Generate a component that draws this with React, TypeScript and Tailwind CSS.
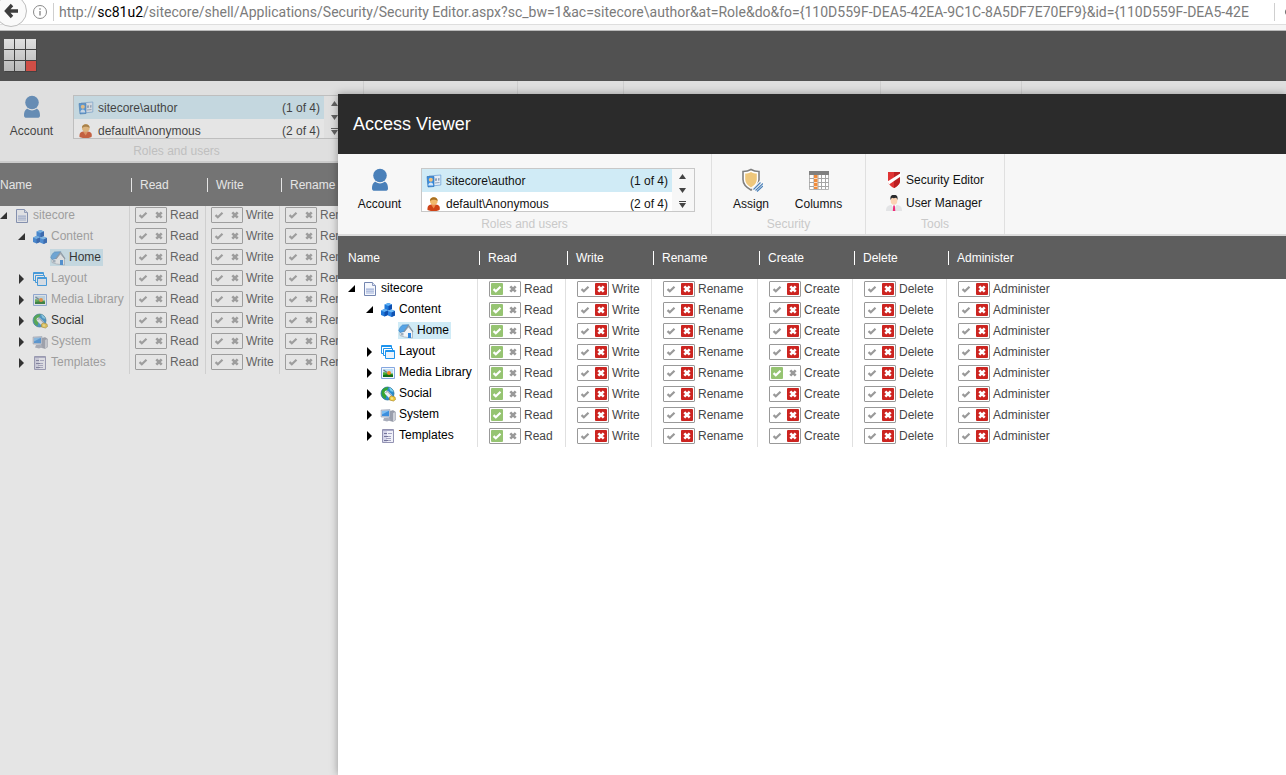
import React, { useState } from 'react';
import clsx from 'clsx';

type Access = 'allow' | 'deny' | null;

interface TreeItem {
  name: string;
  level: number;
  icon: React.ReactNode;
  open?: boolean;
  selected?: boolean;
  locked?: boolean;
}

/* ---------- Icons ---------- */

const DocIcon = () => (
  <svg width="16" height="16" viewBox="0 0 16 16">
    <path d="M2.500 1.500h8l3 3v10h-11z" fill="#f6f8fd" stroke="#7486b0" />
    <path d="M10.500 1.500v3h3" fill="#dfe5f4" stroke="#8a99be" />
    <path d="M4 7h8v6H4z" fill="#c9d3ea" />
    <path d="M4 8.500h8M4 10.500h8" stroke="#b3c0e0" />
  </svg>
);

const CubesIcon = () => (
  <svg width="16" height="16" viewBox="0 0 16 16">
    <path d="M4.500 2.500 8.500 1l3.500 1.500V7L8.500 8.500l-4-1.500z" fill="#1f78da" />
    <path d="M4.500 2.500 8.500 1 12 2.500 8.500 4z" fill="#5fb0f5" />
    <path d="M8.500 4 12 2.500V7L8.500 8.500z" fill="#0f4fae" />
    <path d="M1 8.500 4.500 7 8 8.500v4.500l-3.500 1.500L1 13z" fill="#1f78da" />
    <path d="M1 8.500 4.500 7 8 8.500 4.500 10z" fill="#5fb0f5" />
    <path d="M4.500 10 8 8.500V13l-3.500 1.500z" fill="#0f4fae" />
    <path d="M8 9l3.500-1.500L15 9v4.500L11.500 15 8 13.500z" fill="#2a82e2" />
    <path d="M8 9l3.500-1.500L15 9l-3.500 1.500z" fill="#6fbcf8" />
    <path d="M11.500 10.500 15 9v4.500L11.500 15z" fill="#1152b0" />
  </svg>
);

const HomeIcon = () => (
  <svg width="16" height="16" viewBox="0 0 16 16">
    <path d="M2 8v4.500L6.500 14 14.500 15V8.500L10.500 4 6 8.500z" fill="#f3f5f7" stroke="#a5b0ba" strokeWidth=".8" />
    <path d="M.800 7.500C1.500 5 3 3 4.500 2l6.200-.3L6 8.500 2.200 9.500z" fill="#55a4e6" stroke="#3c82c0" strokeWidth=".6" />
    <path d="M6 8.800 10.600 2.500 15 8.800" fill="none" stroke="#8796a5" strokeWidth="1.200" />
    <path d="M10 10h3v5h-3z" fill="#2f86dd" />
    <path d="M3 10h2.500v2.500H3z" fill="#9fb0c1" />
  </svg>
);

const LayoutIcon = () => (
  <svg width="16" height="16" viewBox="0 0 16 16" stroke="#1e94ee" strokeWidth="1">
    <path d="M1.500 1.500h10v8h-10z" fill="#fff" />
    <path d="M1.500 2.500h10" />
    <path d="M3.500 4.500h9v7h-9z" fill="#fff" />
    <path d="M5.500 6.500h9v8h-9z" fill="#eaf3fc" />
    <path d="M5.500 7.500h9" />
  </svg>
);

const MediaIcon = () => (
  <svg width="16" height="16" viewBox="0 0 16 16">
    <path d="M1.500 2.500h13v11h-13z" fill="#f2f7ff" stroke="#85a7df" />
    <path d="M3 4h10v8H3z" fill="#bfe0f4" />
    <path d="M3 7.500c3-1 5 1.500 10 1V12H3z" fill="#4aae35" />
    <path d="M3 10c3 0 5-2 10 0v2H3z" fill="#14701b" />
    <path d="M3.500 5l3.500 2.500" stroke="#6b7d88" strokeWidth="1.500" />
    <circle cx="9" cy="8" r="2" fill="#f58220" />
  </svg>
);

const SocialIcon = () => (
  <svg width="16" height="16" viewBox="0 0 16 16">
    <circle cx="7.500" cy="7.500" r="6.500" fill="#2b8ccc" stroke="#1b6a8d" strokeWidth=".7" />
    <path d="M2 4.500C4 1.500 7 1 8.500 1.500L7 4.500 5 6l1.500 3-1 4C2 11.500 1 8 2 4.500z" fill="#35a533" />
    <path d="M9 1.500c2 .5 4 2 4.500 4.500l-3-1z" fill="#7ed0f0" />
    <path d="M6.500 6.500 10.500 10.500" stroke="#eef1f3" strokeWidth="4" strokeLinecap="round" />
    <path d="M5.500 7c1-2 3-1.500 3.500 0s2 1 2.500 3" stroke="#87939c" strokeWidth="1" fill="none" />
    <path d="M9.500 11l2-1 3.500 1 .5 2.500-2 1.500-4-1z" fill="#f2cd3c" stroke="#a07a14" strokeWidth=".6" />
    <path d="M12 11.500v2" stroke="#fff8d0" />
  </svg>
);

const SystemIcon = () => (
  <svg width="16" height="16" viewBox="0 0 16 16">
    <path d="M9.500 4.500 13 3.500l2.500 1.500v8L13 14.500l-3.500-1z" fill="#9a9eac" stroke="#7f8494" strokeWidth=".5" />
    <path d="M13 6v8.500L15.500 13V5z" fill="#cdd0d8" />
    <path d="M1 3l9-.5v8L1 10z" fill="#c5ccdb" stroke="#8e98ad" strokeWidth=".5" />
    <path d="M2 4l7-.3v5.500L2 9z" fill="#3d8fdd" />
    <path d="M2 4l7-.3L2 7.500z" fill="#7fbff3" />
    <path d="M4 11h4.500l2.500 2-4 1.500-4-1z" fill="#a8adbb" />
  </svg>
);

const TemplateIcon = () => (
  <svg width="16" height="16" viewBox="0 0 16 16">
    <path d="M2.500 1.500h11v13h-11z" fill="#f1f1f9" stroke="#9393b3" />
    <path d="M3 2h10v1H3z" fill="#a9a9c8" />
    <path d="M3 3h4v11H3z" fill="#d4d4e8" />
    <path d="M4 5.500h3M4 8.500h4M4 12.500h4" stroke="#74749a" />
    <path d="M8 5.500h4M8 8.500h3M6 10.500h5M8 12.500h3" stroke="#a4a4c2" />
  </svg>
);

const RoleIcon = () => (
  <svg width="16" height="16" viewBox="0 0 16 16">
    <path d="M3 3 14.800 2v10L6 13z" fill="#e4edf7" stroke="#6fa3d8" strokeWidth=".8" />
    <path d="M9 5.500l2-.2v2.500l-2 .2zM12 5.200l1.500-.2v2.500l-1.500.2zM9 9.500l4.500-.4v1L9 10.500z" fill="#8fa2ba" />
    <path d="M1 3.500h7v10L2 14z" fill="#3a8fe0" stroke="#2768ad" strokeWidth=".6" />
    <circle cx="4.800" cy="6.800" r="2" fill="#f5c27a" />
    <path d="M2.300 12.500c0-4 5-4 5 0z" fill="#d5e8fb" />
  </svg>
);

const UserIcon = () => (
  <svg width="16" height="16" viewBox="0 0 16 16">
    <path d="M1.500 14c-.5-4 1.500-5.500 4-5.500h4c3.500 0 5 2 4 5.500-2.500 1.600-9 1.600-12 0z" fill="#cf4316" />
    <path d="M5 8.500h5l-2.300 4z" fill="#f08b4a" />
    <circle cx="7.800" cy="5" r="3.800" fill="#f1b96c" />
    <path d="M4 5C3.500 0 12 0 11.600 5 10 3.500 6.500 3 4 5z" fill="#a87022" />
  </svg>
);

const AccountIcon = () => (
  <svg width="24" height="24" viewBox="0 0 24 24" fill="#4a80b9">
    <circle cx="12" cy="7.500" r="6.800" />
    <path d="M4 20.500c0-4.500 2-6.700 3.500-6.700 3 2.200 6 2.200 9 0 1.500 0 3.500 2.200 3.500 6.700 0 1.500-1 2.300-2.500 2.300h-11C5 22.800 4 22 4 20.500z" />
  </svg>
);

const AssignIcon = () => (
  <svg width="24" height="24" viewBox="0 0 24 24">
    <path d="M12 1.500c2.500 1.500 5.500 2 8 2v8c0 4.500-3.500 8-8 10.500-4.500-2.500-8-6-8-10.500v-8c2.500 0 5.500-.5 8-2z" fill="#fff" stroke="#808080" strokeWidth="1.600" />
    <path d="M12 4c2 1 3.700 1.500 5.800 1.600v5.900c0 3.300-2.300 6-5.800 8-3.500-2-5.800-4.700-5.800-8V5.600C8.300 5.500 10 5 12 4z" fill="#eec77c" />
    <path d="M14.500 23 23.500 14.500" stroke="#f7f7f7" strokeWidth="6" />
    <path d="M14.500 21.500l7-7M16.500 22.500l7.500-7M18 23.500l6-5.500" stroke="#4a80b9" strokeWidth="1.100" />
  </svg>
);

const ColumnsIcon = () => (
  <svg width="24" height="24" viewBox="0 0 24 24">
    <path d="M2.500 4.500h19v17h-19z" fill="#fff" stroke="#b4b4b4" />
    <path d="M2 3h20v4H2z" fill="#808080" />
    <path d="M2 10.500h20M2 14.500h20M2 18.500h20M7 7v14M11 7v14M14.500 7v14M18.500 7v14" stroke="#a5a5a5" fill="none" />
    <path d="M7 7h3.500v14H7z" fill="#f08c3c" />
    <path d="M7 10.500h3.500M7 14.500h3.500M7 18.500h3.500" stroke="#fbd9bd" />
  </svg>
);

const SecurityEditorIcon = () => (
  <svg width="16" height="16" viewBox="0 0 16 16">
    <path d="M2 0h12v9c0 3-3 5.500-6 7-3-1.500-6-4-6-7z" fill="#e03434" />
    <path d="M8 0h6v9c0 3-3 5.500-6 7z" fill="#bb1f22" />
    <path d="M1.500 9.500 15 1v3.200L3 12.500z" fill="#fff" />
  </svg>
);

const UserManagerIcon = () => (
  <svg width="16" height="16" viewBox="0 0 16 16">
    <path d="M0 16c0-3.500 1-5.500 5-6h6c4 .5 5 2.500 5 6z" fill="#e3e4e6" />
    <path d="M5.500 9.800h5L8 14z" fill="#fff" />
    <path d="M7.300 10.500h1.500L9.300 16H6.800z" fill="#f02a78" />
    <ellipse cx="8" cy="5.500" rx="3.300" ry="4.300" fill="#fbd3b4" />
    <path d="M4.500 5C4 0 6 0 8 0s4 0 3.500 5c-.7-1.500-1-2-1.500-2.200-1.500.6-3 .6-4 0C5.300 3.200 5 4 4.500 5z" fill="#2a2a2c" />
  </svg>
);

const LogoIcon = () => (
  <svg width="34" height="34" viewBox="0 0 34 34">
    <defs>
      <linearGradient id="logo" x1="0" y1="0" x2="0" y2="33" gradientUnits="userSpaceOnUse">
        <stop offset="0" stopColor="#f8f8f8" />
        <stop offset="1" stopColor="#bcbcbc" />
      </linearGradient>
    </defs>
    <path d="M1 1h32v32H1z" fill="#161616" />
    <g fill="url(#logo)">
      {[0, 11, 22].map((y) => [0, 11, 22].map((x) => <rect key={`${x}-${y}`} x={x} y={y} width="10" height="10" />))}
    </g>
    <path d="M22 22h10v10H22z" fill="#e0271c" />
  </svg>
);

/* ---------- Data ---------- */

const rights = ['Read', 'Write', 'Rename', 'Create', 'Delete', 'Administer'];

const tree: TreeItem[] = [
  { name: 'sitecore', level: 0, icon: <DocIcon />, open: true, locked: true },
  { name: 'Content', level: 1, icon: <CubesIcon />, open: true, locked: true },
  { name: 'Home', level: 2, icon: <HomeIcon />, selected: true },
  { name: 'Layout', level: 1, icon: <LayoutIcon />, open: false, locked: true },
  { name: 'Media Library', level: 1, icon: <MediaIcon />, open: false, locked: true },
  { name: 'Social', level: 1, icon: <SocialIcon />, open: false },
  { name: 'System', level: 1, icon: <SystemIcon />, open: false, locked: true },
  { name: 'Templates', level: 1, icon: <TemplateIcon />, open: false, locked: true },
];

const accounts = [
  { name: 'sitecore\\author', count: '(1 of 4)', icon: <RoleIcon /> },
  { name: 'default\\Anonymous', count: '(2 of 4)', icon: <UserIcon /> },
];

const effectiveAccess = (item: string, right: string): Access =>
  right === 'Read' || (item === 'Media Library' && right === 'Create') ? 'allow' : 'deny';

/* ---------- Ribbon ---------- */

function Chunk({ title, className, titleClass, children }: { title?: string; className?: string; titleClass?: string; children?: React.ReactNode }) {
  return (
    <section className="shrink-0 border-r border-[#e0e0e0] pt-3.5">
      <div className={clsx('flex h-11', className)}>{children}</div>
      {title && <h2 className={clsx('mt-1 text-center leading-4 text-[#c9c9c9]', titleClass)}>{title}</h2>}
    </section>
  );
}

function BigButton({ icon, label, className }: { icon: React.ReactNode; label: string; className: string }) {
  return (
    <button className={clsx('flex flex-col items-center gap-1 leading-4', className)}>
      {icon}
      <span>{label}</span>
    </button>
  );
}

function AccountList() {
  const [current, setCurrent] = useState(0);

  return (
    <div className="flex h-11 w-[274px] overflow-hidden border border-[#c8c8c8] bg-white">
      <ul className="flex-1">
        {accounts.map((account, idx) => (
          <li key={account.name}>
            <button
              onClick={() => setCurrent(idx)}
              className={clsx('flex h-[23px] w-full items-center pr-1 pl-1', current === idx && 'bg-[#d0ebf6]')}
            >
              {account.icon}
              <span className="ml-1 flex-1 text-left">{account.name}</span>
              <span>{account.count}</span>
            </button>
          </li>
        ))}
      </ul>
      <div className="flex w-[22px] flex-col items-center bg-[#f7f7f7] pr-px">
        <button aria-label="Scroll up" className="flex h-3.5 items-center">
          <svg width="7" height="5" viewBox="0 0 7 5"><path d="M3.500 0 7 5H0z" fill="#444" /></svg>
        </button>
        <button aria-label="Scroll down" className="flex h-3.5 items-center">
          <svg width="7" height="5" viewBox="0 0 7 5"><path d="M0 0h7L3.500 5z" fill="#444" /></svg>
        </button>
        <button aria-label="Show all" className="flex h-3.5 items-center">
          <svg width="7" height="7" viewBox="0 0 7 7"><path d="M0 0h7v1H0zM0 2h7L3.500 7z" fill="#444" /></svg>
        </button>
      </div>
    </div>
  );
}

/* ---------- Rights grid ---------- */

function CheckMark({ color }: { color: string }) {
  return (
    <svg width="12" height="12" viewBox="0 0 12 12" fill="none">
      <path d="M2.500 6.200 4.800 8.200 9.500 3.800" stroke={color} strokeWidth="2.200" />
    </svg>
  );
}

function CrossMark({ color }: { color: string }) {
  return (
    <svg width="12" height="12" viewBox="0 0 12 12" fill="none">
      <path d="M3.300 3.300 8.700 8.700M8.700 3.300 3.300 8.700" stroke={color} strokeWidth="2.600" />
    </svg>
  );
}

function RightToggle({ name, value }: { name: string; value: Access }) {
  return (
    <div className="flex items-center gap-[3px]">
      <div className="flex h-4 w-8 gap-1 rounded-[1px] border border-[#999] p-px">
        <button aria-label={`Allow ${name}`} className={clsx('h-3 w-3 rounded-[1px]', value === 'allow' && 'bg-[#96c472]')}>
          <CheckMark color={value === 'allow' ? '#fff' : '#999'} />
        </button>
        <button aria-label={`Deny ${name}`} className={clsx('h-3 w-3 rounded-[1px]', value === 'deny' && 'bg-[#cc2420]')}>
          <CrossMark color={value === 'deny' ? '#fff' : '#999'} />
        </button>
      </div>
      <span className="leading-4 text-[#474747]">{name}</span>
    </div>
  );
}

function TreeNode({ item, muted }: { item: TreeItem; muted?: boolean }) {
  return (
    <div className="flex pt-px" style={{ paddingLeft: item.level * 18 }}>
      <span className="flex h-[17px] w-3.5 items-center">
        {item.open !== undefined && (
          <button aria-label={item.name} aria-expanded={item.open}>
            {item.open ? (
              <svg width="7" height="7" viewBox="0 0 7 7"><path d="M7 0v7H0z" fill="#000" /></svg>
            ) : (
              <svg className="ml-px" width="5" height="10" viewBox="0 0 5 10"><path d="M0 0 5 5 0 10z" fill="#000" /></svg>
            )}
          </button>
        )}
      </span>
      <a
        href="#"
        className={clsx(
          'flex h-[17px] items-end gap-[3px] leading-[17px] whitespace-nowrap',
          item.selected && 'bg-[#d0ebf6] pr-0.5',
          muted && item.locked ? 'text-[#999]' : 'text-black',
        )}
      >
        {item.icon}
        <span>{item.name}</span>
      </a>
    </div>
  );
}

function RightsGrid({ columns, viewer }: { columns: string[]; viewer?: boolean }) {
  return (
    <table className="w-full table-fixed border-separate border-spacing-0">
      <colgroup>
        <col className={viewer ? 'w-[139px]' : 'w-[129px]'} />
        <col className={viewer ? 'w-[88px]' : 'w-[76px]'} />
        <col className={viewer ? 'w-[86px]' : 'w-[74px]'} />
        {viewer && (
          <>
            <col className="w-[106px]" />
            <col className="w-[95px]" />
            <col className="w-[94px]" />
          </>
        )}
        <col />
      </colgroup>
      <thead>
        <tr className="h-[43px] bg-[#5e5e5e] text-left text-white">
          <th className={clsx('p-0 font-normal', viewer && 'pl-2.5')}>Name</th>
          {columns.map((right) => (
            <th key={right} className="p-0 font-normal">
              <div className="flex items-center gap-2 pl-0.5">
                <span className="h-3.5 w-px bg-white" />
                {right}
              </div>
            </th>
          ))}
        </tr>
      </thead>
      <tbody>
        {tree.map((item) => (
          <tr key={item.name} className="h-[21px]">
            <td className={clsx('p-0 align-top', viewer && 'pl-2.5')}>
              <TreeNode item={item} muted={!viewer} />
            </td>
            {columns.map((right) => (
              <td key={right} className={clsx('border-l border-[#e0e0e0] p-0 align-top', viewer ? 'pt-0.5 pl-[11px]' : 'pt-px pl-[5px]')}>
                <RightToggle name={right} value={viewer ? effectiveAccess(item.name, right) : null} />
              </td>
            ))}
          </tr>
        ))}
      </tbody>
    </table>
  );
}

/* ---------- Windows ---------- */

function AddressBar() {
  return (
    <header className="relative flex h-[31px] shrink-0 flex-col border-b border-[#b9b9b9] bg-[#f5f5f5]">
      <div className="flex h-[25px] items-center border-b border-[#dedede] bg-white">
        <span className="w-8 shrink-0" />
        <button aria-label="Site information" className="shrink-0">
          <svg width="16" height="16" viewBox="0 0 16 16" fill="none" stroke="#8a8a8a">
            <circle cx="8" cy="8" r="6.500" />
            <path d="M8 7v4.500M8 4.300v1.500" strokeWidth="1.400" />
          </svg>
        </button>
        <span className="ml-[5px] h-[18px] w-px shrink-0 bg-[#cfcfcf]" />
        <div role="textbox" aria-label="Address" className="ml-[5px] min-w-0 flex-1 font-['Roboto',sans-serif] text-sm leading-5 whitespace-nowrap text-[#7b7b7b]">
          http://<span className="text-black">sc81u2</span>
          {'/sitecore/shell/Applications/Security/Security Editor.aspx?sc_bw=1&ac=sitecore\\author&at=Role&do&fo={110D559F-DEA5-42EA-9C1C-8A5DF7E70EF9}&id={110D559F-DEA5-42E'}
        </div>
        <span className="h-[18px] w-px shrink-0 bg-[#cfcfcf]" />
        <button aria-label="Reload" className="shrink-0">
          <svg width="11" height="14" viewBox="0 0 11 14"><path d="M12 4.500a3 3 0 0 0 0 5" fill="none" stroke="#777" strokeWidth="1.500" /></svg>
        </button>
      </div>
      <button aria-label="Back" className="absolute top-0 left-0">
        <svg width="28" height="27" viewBox="0 0 28 27">
          <circle cx="11" cy="11" r="15.500" fill="#fafafa" stroke="#bdbdbd" />
          <path d="M12 5 6.500 11l5.500 6M7 11h11" fill="none" stroke="#3d3d3d" strokeWidth="3.400" />
        </svg>
      </button>
    </header>
  );
}

function SecurityEditor() {
  return (
    <div>
      <div className="h-[50px] bg-[#2b2b2b] pt-2 pl-1">
        <LogoIcon />
      </div>
      <div className="flex h-[82px] overflow-hidden border-b-2 border-[#dcdcdc] bg-[#f7f7f7]">
        <Chunk title="Roles and users" className="gap-5 pr-4 pl-2.5" titleClass="pr-2.5">
          <BigButton icon={<AccountIcon />} label="Account" className="w-[43px]" />
          <AccountList />
        </Chunk>
        <Chunk className="w-[153px]" />
        <Chunk className="w-[105px]" />
        <Chunk className="w-[256px]" />
        <Chunk className="w-[140px]" />
      </div>
      <RightsGrid columns={rights.slice(0, 3)} />
    </div>
  );
}

function AccessViewer() {
  return (
    <div className="absolute top-[63px] right-0 bottom-0 left-[338px] bg-white shadow-[0_0_8px_rgba(0,0,0,0.35)]" role="dialog" aria-label="Access Viewer">
      <h1 className="flex h-[60px] items-center bg-[#2b2b2b] pl-[15px] text-lg text-white">Access Viewer</h1>
      <div className="flex h-[82px] border-b-2 border-[#dcdcdc] bg-[#f7f7f7]">
        <Chunk title="Roles and users" className="gap-5 pr-4 pl-5">
          <BigButton icon={<AccountIcon />} label="Account" className="w-[43px]" />
          <AccountList />
        </Chunk>
        <Chunk title="Security" className="gap-[22px] px-5">
          <BigButton icon={<AssignIcon />} label="Assign" className="w-[38px]" />
          <BigButton icon={<ColumnsIcon />} label="Columns" className="w-[53px]" />
        </Chunk>
        <Chunk title="Tools" className="flex-col px-5">
          <button className="flex h-[23px] w-[98px] shrink-0 items-center gap-1 whitespace-nowrap">
            <SecurityEditorIcon />
            Security Editor
          </button>
          <button className="flex h-[23px] w-[98px] shrink-0 items-center gap-1 whitespace-nowrap">
            <UserManagerIcon />
            User Manager
          </button>
        </Chunk>
      </div>
      <RightsGrid columns={rights} viewer />
    </div>
  );
}

export default function App() {
  return (
    <div className="flex h-screen flex-col overflow-hidden bg-white font-['Liberation_Sans',Arial,sans-serif] text-xs text-[#131313]">
      <AddressBar />
      <main className="relative flex-1 overflow-hidden">
        <SecurityEditor />
        {/* Modal backdrop */}
        <div className="absolute inset-0 bg-[#a8a8a8]/30" />
        <AccessViewer />
      </main>
    </div>
  );
}
